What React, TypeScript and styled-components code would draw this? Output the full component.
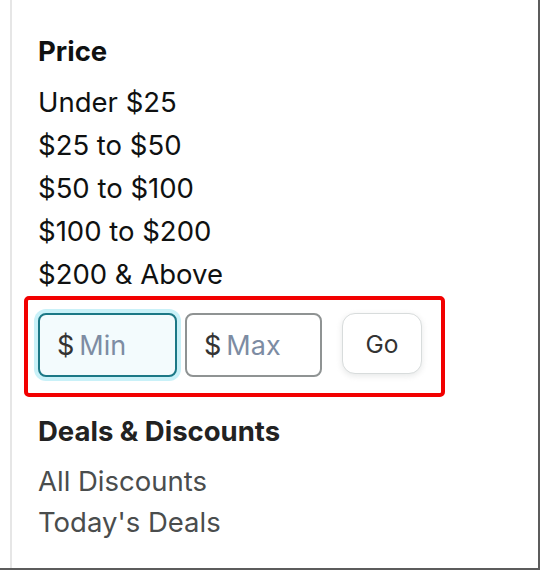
import React from "react";
import styled, { createGlobalStyle } from "styled-components";

const FONT = `Inter, "Open Sans", "Noto Sans", Arial, sans-serif`;

const GlobalStyle = createGlobalStyle`
  html, body { margin: 0; padding: 0; background: #ffffff; }
  body { font-family: ${FONT}; }
  * { box-sizing: border-box; }
`;

const Frame = styled.div`
  width: 540px;
  height: 570px;
  border-right: 2px solid #5c5c5c;
  border-bottom: 2px solid #5c5c5c;
  background: #ffffff;
  overflow: hidden;
`;

const Panel = styled.div`
  margin-left: 10px;
  height: 100%;
  border-left: 2px solid #e6e6e6;
  padding: 31px 0 0 26px;
  display: flex;
  flex-direction: column;
  align-items: flex-start;
`;

const Heading = styled.h3<{ $top?: number }>`
  margin: ${(p) => p.$top ?? 0}px 0 0 0;
  font-size: 27.5px;
  line-height: 40px;
  font-weight: 700;
  color: ${(p) => (p.$top ? "#222222" : "#0f1111")};
`;

const List = styled.ul<{ $top: number; $lh: number; $color: string }>`
  list-style: none;
  margin: ${(p) => p.$top}px 0 0 0;
  padding: 0;
  font-size: 27.5px;
  line-height: ${(p) => p.$lh}px;
  color: ${(p) => p.$color};
`;

const Item = styled.li`
  margin: 0;
  white-space: nowrap;
`;

const RangeForm = styled.div`
  margin: 0 0 0 -14px;
  width: 421px;
  border: 4px solid #f20000;
  border-radius: 5px;
  padding: 13px 0 16px 10px;
  display: flex;
  align-items: center;
`;

const InputBox = styled.label<{ $focused?: boolean }>`
  width: ${(p) => (p.$focused ? 139 : 137)}px;
  height: 64px;
  margin-right: ${(p) => (p.$focused ? 8 : 20)}px;
  border: 2px solid ${(p) => (p.$focused ? "#1b7886" : "#8f9393")};
  border-radius: 8px;
  background: ${(p) => (p.$focused ? "#f3fbfd" : "#ffffff")};
  box-shadow: ${(p) => (p.$focused ? "0 0 0 4px #c9f1f8" : "none")};
  display: flex;
  align-items: center;
  padding-left: 17px;
  gap: 5px;
`;

const Prefix = styled.span`
  font-size: 27px;
  color: #333333;
  line-height: 1;
`;

const Field = styled.input`
  width: 70px;
  border: none;
  outline: none;
  background: transparent;
  padding: 0;
  font-family: ${FONT};
  font-size: 27px;
  color: #0f1111;
  &::placeholder {
    color: #7d8ca3;
  }
`;

const GoButton = styled.button`
  width: 80px;
  height: 61px;
  margin-top: -3px;
  border: 1px solid #d8dcdc;
  border-radius: 13px;
  background: #ffffff;
  box-shadow: 0 2px 6px rgba(213, 217, 217, 0.6);
  font-family: ${FONT};
  font-size: 24.5px;
  color: #333333;
  padding: 0;
  cursor: pointer;
`;

const prices = ["Under $25", "$25 to $50", "$50 to $100", "$100 to $200", "$200 & Above"];
const deals = ["All Discounts", "Today's Deals"];

export default function App() {
  return (
    <>
      <GlobalStyle />
      <Frame>
        <Panel>
          <Heading>Price</Heading>
          <List $top={10} $lh={43} $color="#0f1111">
            {prices.map((p) => (
              <Item key={p}>{p}</Item>
            ))}
          </List>
          <RangeForm>
            <InputBox $focused>
              <Prefix>$</Prefix>
              <Field placeholder="Min" />
            </InputBox>
            <InputBox>
              <Prefix>$</Prefix>
              <Field placeholder="Max" />
            </InputBox>
            <GoButton>Go</GoButton>
          </RangeForm>
          <Heading $top={14}>Deals &amp; Discounts</Heading>
          <List $top={10} $lh={41} $color="#4a4d4d">
            {deals.map((d) => (
              <Item key={d}>{d}</Item>
            ))}
          </List>
        </Panel>
      </Frame>
    </>
  );
}
